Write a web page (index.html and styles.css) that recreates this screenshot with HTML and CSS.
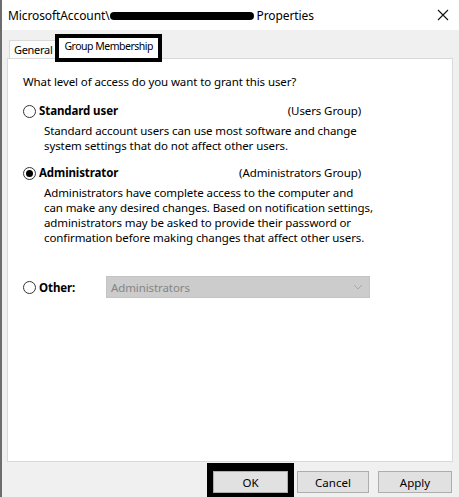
FILE: index.html
```html
<!DOCTYPE html>
<html lang="en">
<head>
  <meta charset="UTF-8" />
  <title>Properties</title>
  <link rel="stylesheet" href="styles.css">
</head>
<body>
  <div class="dialog">
    <!-- Titelleiste -->
    <header class="titlebar">
      <span class="title">MicrosoftAccount\<span class="redacted"></span>Properties</span>
      <svg class="close" width="12" height="12" viewBox="0 0 12 12">
        <path d="M1 1 L11 11 M11 1 L1 11" stroke="#111" stroke-width="1.1" fill="none"/>
      </svg>
    </header>

    <nav class="tabs">
      <div class="tab">General</div>
      <div class="tab active">Group Membership</div>
    </nav>

    <section class="panel">
      <p class="question">What level of access do you want to grant this user?</p>

      <div class="option">
        <div class="option-head">
          <label><span class="radio"></span><b>Standard user</b></label>
          <span class="group">(Users Group)</span>
        </div>
        <p class="desc">Standard account users can use most software and change<br>system settings that do not affect other users.</p>
      </div>

      <div class="option">
        <div class="option-head">
          <label><span class="radio checked"></span><b>Administrator</b></label>
          <span class="group">(Administrators Group)</span>
        </div>
        <p class="desc">Administrators have complete access to the computer and<br>can make any desired changes. Based on notification settings,<br>administrators may be asked to provide their password or<br>confirmation before making changes that affect other users.</p>
      </div>

      <div class="other">
        <label><span class="radio"></span><b>Other:</b></label>
        <div class="combo">
          <span>Administrators</span>
          <svg width="10" height="6" viewBox="0 0 10 6">
            <path d="M1 1 L5 5 L9 1" stroke="#a8a8a8" stroke-width="1" fill="none"/>
          </svg>
        </div>
      </div>
    </section>

    <footer class="buttons">
      <div class="mark"><button>OK</button></div>
      <button class="cancel">Cancel</button>
      <button>Apply</button>
    </footer>
  </div>
</body>
</html>
```

FILE: styles.css
```css
* {
  box-sizing: border-box;
}

body, html {
  margin: 0;
  padding: 0;
  height: 497px;
  overflow: hidden;
  font-family: 'Noto Sans', 'Open Sans', sans-serif;
  font-size: 11.5px;
  letter-spacing: -0.1px;
  color: #000;
}

.dialog {
  height: 497px;
  background: #f0f0f0;
  border-left: 2px solid #6d6d6d;
  display: flex;
  flex-direction: column;
}

.titlebar {
  height: 30px;
  background: #fff;
  display: flex;
  align-items: center;
  justify-content: space-between;
  padding: 0 10px 0 6px;
  flex: none;
  font-size: 12px;
}

.title {
  display: flex;
  align-items: center;
}

.redacted {
  display: inline-block;
  width: 144px;
  height: 8px;
  margin: 2px 3px 0 0;
  background: #000;
  border-radius: 4px;
}

.tabs {
  display: flex;
  align-items: flex-end;
  padding-left: 7px;
  height: 28px;
  flex: none;
  font-size: 11px;
  letter-spacing: -0.3px;
}

.tab {
  height: 18px;
  padding: 0 4px;
  line-height: 17px;
  background: #fcfcfc;
  border: 1px solid #d9d9d9;
  border-bottom: none;
}

.tab.active {
  height: 28px;
  margin: 0 0 -4px -2px;
  background: #fff;
  border: 4px solid #000;
  padding: 0 5px;
  line-height: 17px;
  font-size: 10.5px;
  letter-spacing: -0.5px;
  position: relative;
  z-index: 1;
}

.panel {
  margin: 0 6px 0 5px;
  height: 404px;
  background: #fff;
  border: 1px solid #d9d9d9;
  padding: 15px 15px;
  flex: none;
}

.question {
  margin: 0 0 12px;
  line-height: 16px;
}

.option {
  margin-bottom: 11px;
}

.option-head {
  display: flex;
  justify-content: space-between;
  width: 338px;
  line-height: 18px;
}

label {
  display: flex;
  align-items: center;
  gap: 3px;
}

.radio {
  width: 13px;
  height: 13px;
  border: 1px solid #333;
  border-radius: 50%;
  background: #fff;
  display: inline-flex;
  align-items: center;
  justify-content: center;
}

.radio.checked::after {
  content: "";
  width: 7px;
  height: 7px;
  border-radius: 50%;
  background: #000;
}

.desc {
  margin: 3px 0 0 21px;
  line-height: 15px;
}

.other {
  display: flex;
  align-items: center;
  margin-top: 31px;
}

.other label {
  width: 83px;
}

.combo {
  width: 264px;
  height: 22px;
  background: #cccccc;
  border: 1px solid #c4c4c4;
  color: #858585;
  display: flex;
  align-items: center;
  justify-content: space-between;
  padding: 0 6px 0 4px;
}

.buttons {
  display: flex;
  justify-content: flex-end;
  align-items: flex-start;
  gap: 9px;
  padding: 0 7px 0 0;
  flex: 1;
}

.buttons button {
  margin-top: 9px;
  width: 74px;
  height: 22px;
  background: #e1e1e1;
  border: 1px solid #adadad;
  font-family: inherit;
  font-size: 11.5px;
  color: #000;
  padding: 0;
}

.buttons .cancel {
  width: 72px;
}

.mark {
  background: #000;
  padding: 0 6px;
  height: 35px;
  margin-top: 1px;
  margin-right: -6px;
}

.mark button {
  margin-top: 8px;
  width: 75px;
}
```
